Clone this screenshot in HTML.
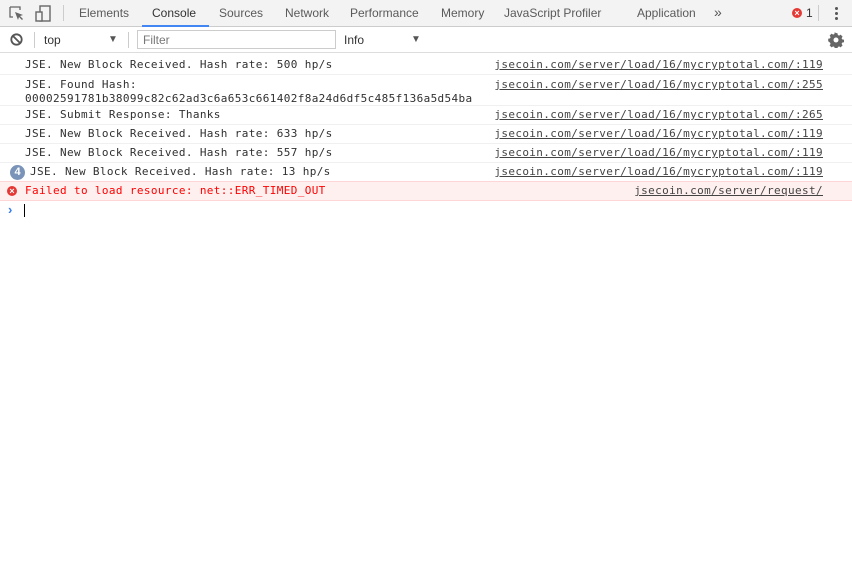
<!DOCTYPE html>
<html><head><style>
*{box-sizing:border-box;margin:0;padding:0}
body{width:852px;height:561px;background:#fff;font-family:"Liberation Sans",sans-serif;position:relative;overflow:hidden}
.tb{position:absolute;left:0;top:0;width:852px;height:27px;background:#f3f3f3;border-bottom:1px solid #ccc}
.tab{position:absolute;top:6px;font-size:12px;color:#5a5a5a}
.fb{position:absolute;left:0;top:27px;width:852px;height:26px;background:#fff;border-bottom:1px solid #ddd;font-size:12px;color:#333}
.row{position:absolute;left:0;width:852px;border-bottom:1px solid #f0f0f0;font-family:"DejaVu Sans Mono",monospace;font-size:11px;letter-spacing:0.37px;color:#303030;line-height:14px}
.row .m{position:absolute;left:25px;top:3px;white-space:pre}
.row .l{position:absolute;right:29px;top:3px;text-decoration:underline;color:#444}
</style></head><body>
<div class="tb">
<svg style="position:absolute;left:9px;top:6px" width="16" height="16" viewBox="0 0 16 16"><path d="M1 1h10v3M1 1v10h3" fill="none" stroke="#666" stroke-width="1.3"/><path d="M6 6l8 3-3 1 3 3-1 1-3-3-1 3z" fill="#666"/></svg>
<svg style="position:absolute;left:35px;top:5px" width="17" height="17" viewBox="0 0 17 17"><rect x="5" y="1" width="10" height="15" fill="none" stroke="#666" stroke-width="1.4"/><rect x="1" y="7" width="6" height="9" fill="#f3f3f3" stroke="#666" stroke-width="1.4"/></svg>
<div style="position:absolute;left:63px;top:5px;width:1px;height:16px;background:#ccc"></div>
<span class="tab" style="left:79px">Elements</span>
<span class="tab" style="left:152px;color:#333">Console</span>
<div style="position:absolute;left:142px;top:25px;width:67px;height:2px;background:#4285f4"></div>
<span class="tab" style="left:219px">Sources</span>
<span class="tab" style="left:285px">Network</span>
<span class="tab" style="left:350px">Performance</span>
<span class="tab" style="left:441px">Memory</span>
<span class="tab" style="left:504px">JavaScript Profiler</span>
<span class="tab" style="left:637px">Application</span>
<span class="tab" style="left:714px;font-size:14px;top:4px;color:#555">»</span>
<div style="position:absolute;left:792px;top:8px;width:10px;height:10px;border-radius:50%;background:#e53935;color:#fff;font-size:9px;line-height:10px;text-align:center;font-weight:bold">×</div>
<span class="tab" style="left:806px;color:#333">1</span>
<div style="position:absolute;left:818px;top:5px;width:1px;height:16px;background:#ccc"></div>
<div style="position:absolute;left:835px;top:7px;width:3px;height:3px;background:#555;border-radius:50%;box-shadow:0 5px 0 #555,0 10px 0 #555"></div>
</div>
<div class="fb">
<svg style="position:absolute;left:10px;top:6px" width="13" height="13" viewBox="0 0 13 13"><circle cx="6.5" cy="6.5" r="5.2" fill="none" stroke="#555" stroke-width="1.8"/><path d="M3 3l7 7" stroke="#555" stroke-width="1.8"/></svg>
<div style="position:absolute;left:34px;top:5px;width:1px;height:16px;background:#ccc"></div>
<span style="position:absolute;left:44px;top:6px">top</span>
<span style="position:absolute;left:108px;top:7px;font-size:10px;color:#555">▼</span>
<div style="position:absolute;left:128px;top:5px;width:1px;height:16px;background:#ccc"></div>
<div style="position:absolute;left:137px;top:3px;width:199px;height:19px;border:1px solid #ccc;color:#777;padding:2px 5px">Filter</div>
<span style="position:absolute;left:344px;top:6px">Info</span>
<span style="position:absolute;left:411px;top:7px;font-size:10px;color:#555">▼</span>
<svg style="position:absolute;left:828px;top:5px" width="16" height="16" viewBox="0 0 16 16"><path d="M8 1l1.5.2.3 1.8 1.3.6 1.5-1 2 2-1 1.5.6 1.3 1.8.3v2.6l-1.8.3-.6 1.3 1 1.5-2 2-1.5-1-1.3.6-.3 1.8H6.7l-.3-1.8-1.3-.6-1.5 1-2-2 1-1.5-.6-1.3L.2 9.3V6.7L2 6.4l.6-1.3-1-1.5 2-2 1.5 1 1.3-.6.3-1.8z" fill="#666"/><circle cx="8" cy="8" r="2.5" fill="#fff"/></svg>
</div>
<div class="row" style="top:55px;height:20px"><span class="m">JSE. New Block Received. Hash rate: 500 hp/s</span><span class="l">jsecoin.com/server/load/16/mycryptotal.com/:119</span></div>
<div class="row" style="top:75px;height:31px"><span class="m">JSE. Found Hash:
00002591781b38099c82c62ad3c6a653c661402f8a24d6df5c485f136a5d54ba</span><span class="l">jsecoin.com/server/load/16/mycryptotal.com/:255</span></div>
<div class="row" style="top:106px;height:19px"><span class="m" style="top:2px">JSE. Submit Response: Thanks</span><span class="l" style="top:2px">jsecoin.com/server/load/16/mycryptotal.com/:265</span></div>
<div class="row" style="top:125px;height:19px"><span class="m" style="top:2px">JSE. New Block Received. Hash rate: 633 hp/s</span><span class="l" style="top:2px">jsecoin.com/server/load/16/mycryptotal.com/:119</span></div>
<div class="row" style="top:144px;height:19px"><span class="m" style="top:2px">JSE. New Block Received. Hash rate: 557 hp/s</span><span class="l" style="top:2px">jsecoin.com/server/load/16/mycryptotal.com/:119</span></div>
<div class="row" style="top:163px;height:19px"><div style="position:absolute;left:10px;top:2px;width:15px;height:15px;border-radius:50%;background:#7a93b8;color:#fff;font-family:'Liberation Sans',sans-serif;font-size:11px;font-weight:bold;line-height:15px;text-align:center;letter-spacing:0">4</div><span class="m" style="top:2px;left:30px">JSE. New Block Received. Hash rate: 13 hp/s</span><span class="l" style="top:2px">jsecoin.com/server/load/16/mycryptotal.com/:119</span></div>
<div class="row" style="top:181px;height:20px;background:#fff0f0;border-top:1px solid #ffd6d6;border-bottom:1px solid #ffd6d6;color:#f00"><div style="position:absolute;left:7px;top:4px;width:10px;height:10px;border-radius:50%;background:#e53935;color:#fff;font-family:'Liberation Sans',sans-serif;font-size:9px;line-height:10px;text-align:center;font-weight:bold;letter-spacing:0">×</div><span class="m" style="top:2px">Failed to load resource: net::ERR_TIMED_OUT</span><span class="l" style="top:2px;color:#444">jsecoin.com/server/request/</span></div>
<span style="position:absolute;left:8px;top:202px;color:#367cf1;font-size:13px;font-weight:bold">›</span>
<div style="position:absolute;left:24px;top:204px;width:1px;height:13px;background:#000"></div>
</body></html>
